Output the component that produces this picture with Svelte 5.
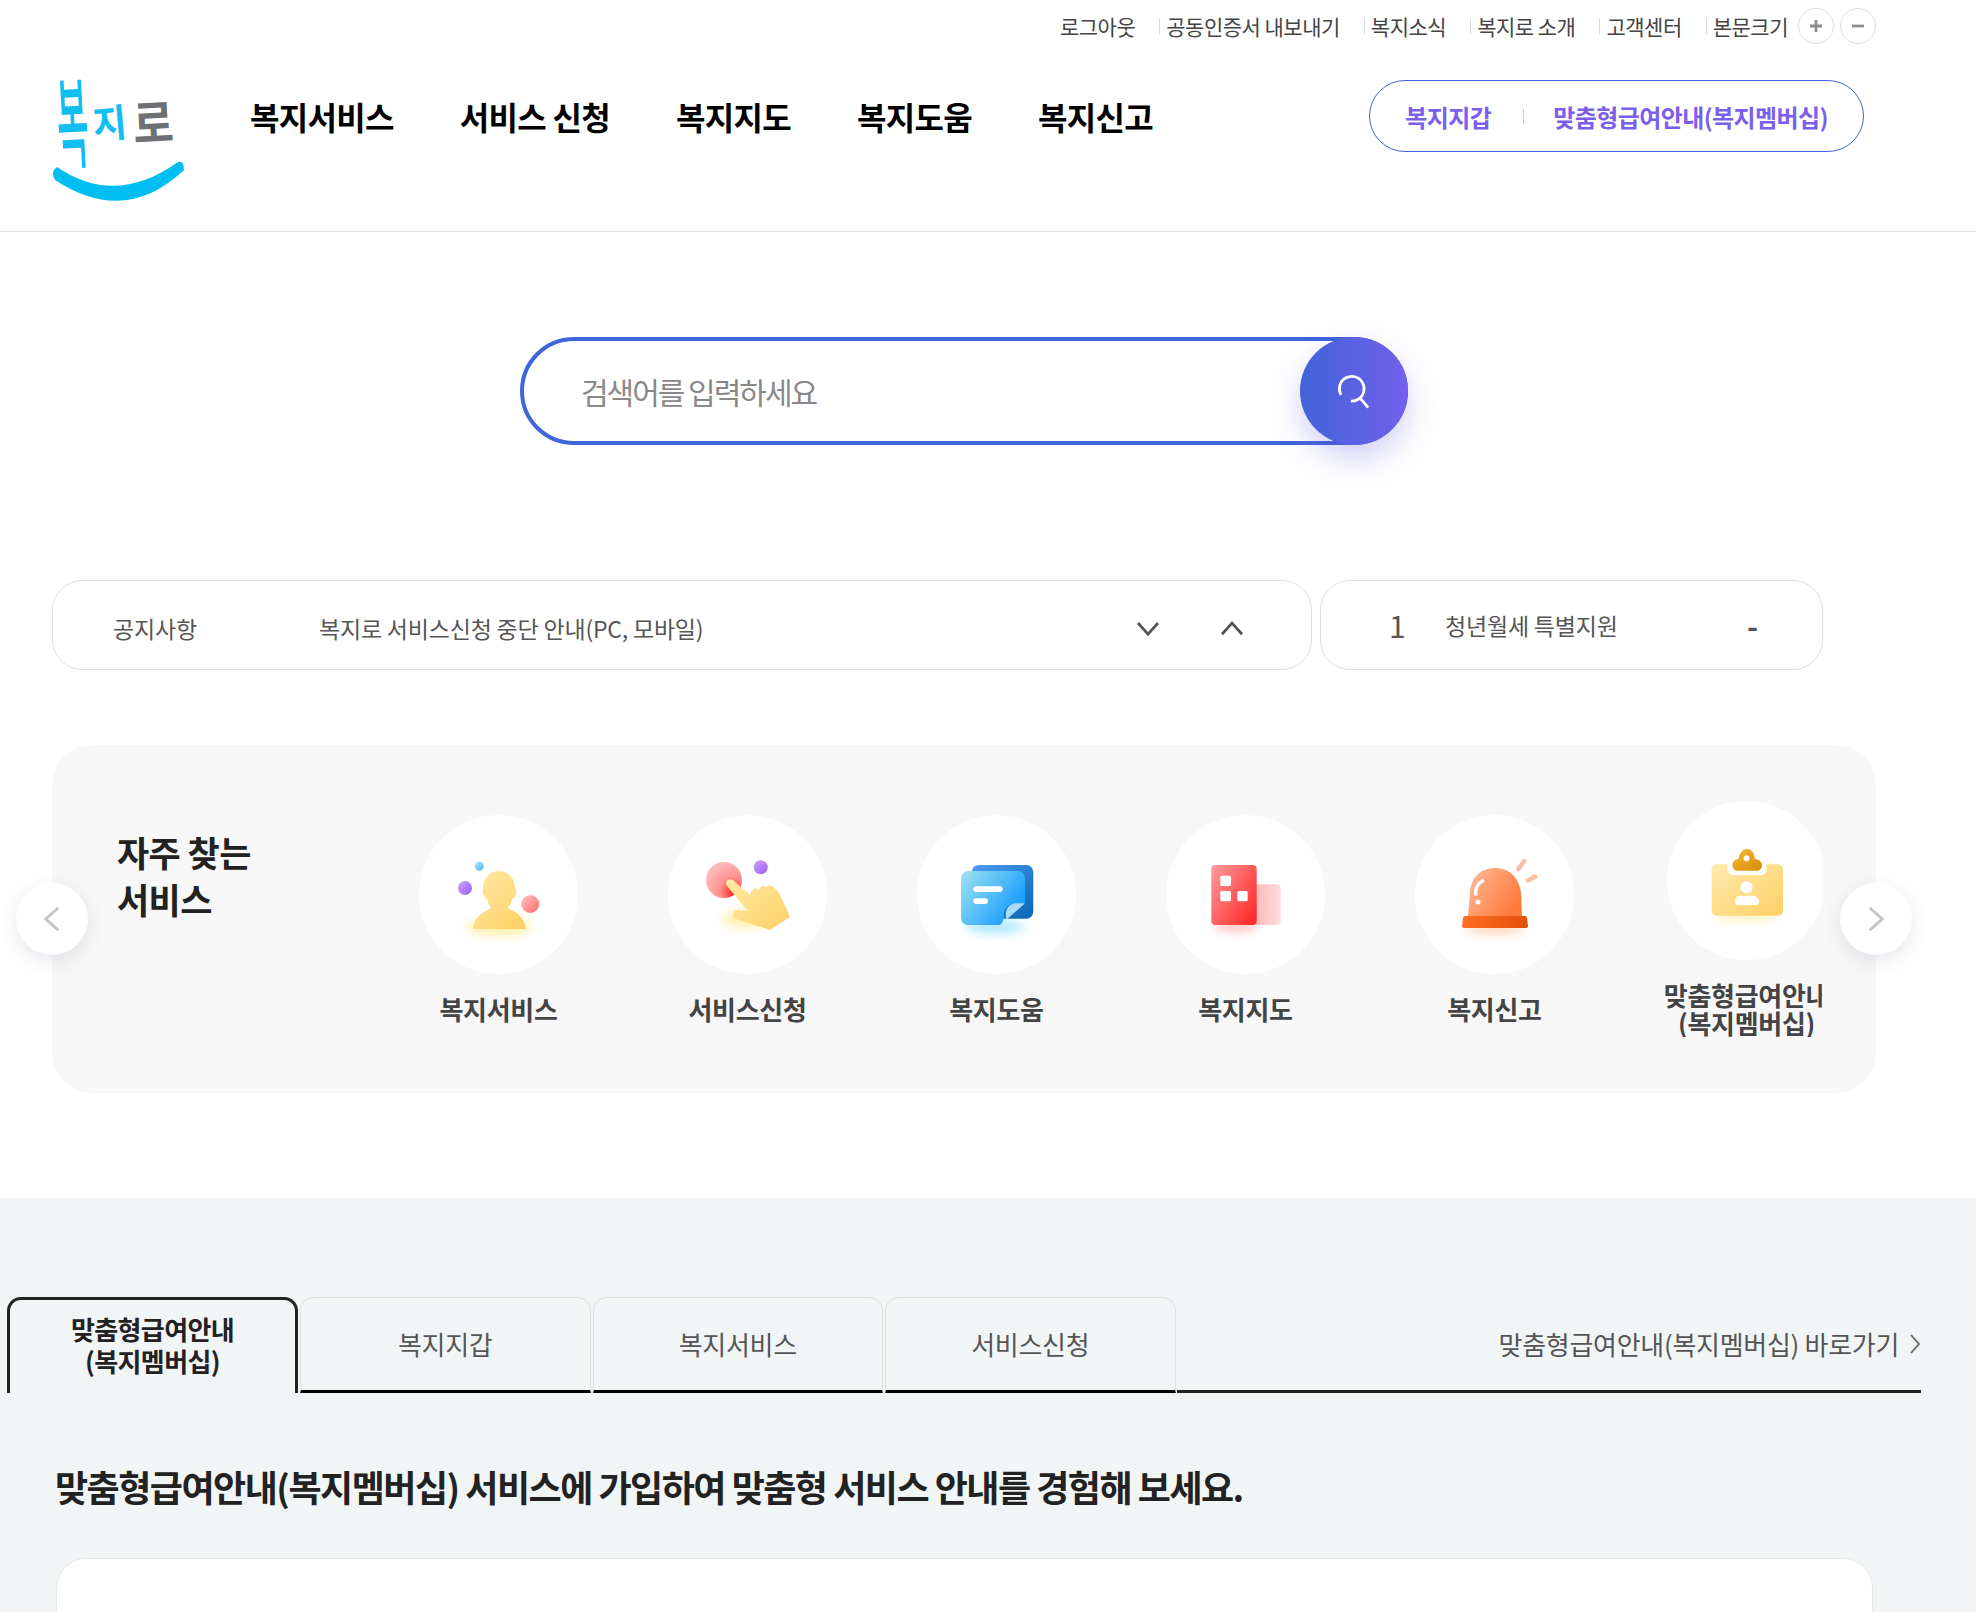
<script>
  const utilLinks = ["공동인증서 내보내기", "복지소식", "복지로 소개", "고객센터"];
  const navItems = ["복지서비스", "서비스 신청", "복지지도", "복지도움", "복지신고"];
  const tabs = ["복지지갑", "복지서비스", "서비스신청"];
</script>

{#snippet chevron(points, cls)}
  <svg class={cls} viewBox="0 0 24 24" aria-hidden="true">
    <polyline {points} fill="none" stroke="currentColor" stroke-width="2.2" />
  </svg>
{/snippet}

{#snippet iconPerson()}
  <svg class="icon" viewBox="0 0 159 159" aria-hidden="true">
    <defs>
      <linearGradient id="p-y" x1="0" y1="0" x2="1" y2="1"><stop offset="0" stop-color="#ffe9a6" /><stop offset="1" stop-color="#ffd064" /></linearGradient>
      <linearGradient id="p-r" x1="0" y1="0" x2="1" y2="1"><stop offset="0" stop-color="#ffc4c4" /><stop offset="1" stop-color="#ff6b6b" /></linearGradient>
      <linearGradient id="p-v" x1="0" y1="0" x2="1" y2="1"><stop offset="0" stop-color="#c9a6ff" /><stop offset="1" stop-color="#9a5cf0" /></linearGradient>
      <linearGradient id="p-b" x1="0" y1="0" x2="1" y2="1"><stop offset="0" stop-color="#b4e6f6" /><stop offset="1" stop-color="#4ab4ea" /></linearGradient>
    </defs>
    <ellipse class="glow" cx="80" cy="112" rx="32" ry="9" fill="#fff0b0" />
    <circle cx="60.3" cy="51.3" r="4.5" fill="url(#p-b)" />
    <circle cx="46" cy="73" r="7" fill="url(#p-v)" />
    <circle cx="111.3" cy="89" r="9" fill="url(#p-r)" />
    <path d="M64 73c0-10 7-17 16-17s16 7 16 17c0 1 2 3 1 6-1 2-2 4-4 5-1 4-2 6-4 9 3 3 15 4 18 21H54c3-17 15-18 18-21-2-3-3-5-4-9-2-1-3-3-4-5-1-3 0-5 0-6z" fill="url(#p-y)" />
  </svg>
{/snippet}

{#snippet iconHand()}
  <svg class="icon" viewBox="0 0 159 159" aria-hidden="true">
    <defs>
      <radialGradient id="h-r" cx="0.8" cy="0.85" r="0.85"><stop offset="0" stop-color="#ff1a1a" /><stop offset="0.5" stop-color="#ff8f8f" /><stop offset="1" stop-color="#ffb8b8" /></radialGradient>
      <linearGradient id="h-y" x1="0" y1="0" x2="1" y2="1"><stop offset="0" stop-color="#ffe9a6" /><stop offset="1" stop-color="#ffd064" /></linearGradient>
      <linearGradient id="h-v" x1="0" y1="0" x2="1" y2="1"><stop offset="0" stop-color="#c9a6ff" /><stop offset="1" stop-color="#9a5cf0" /></linearGradient>
    </defs>
    <ellipse class="glow" cx="78" cy="104" rx="24" ry="9" fill="#fff0b0" />
    <circle cx="56" cy="65" r="18" fill="url(#h-r)" />
    <circle cx="92.7" cy="52.3" r="7" fill="url(#h-v)" />
    <path d="M59 71c-3-3 1-9 6-6l17 15c0-2 1-5 4-6 2-1 4 0 5 1 0-2 2-4 4-4 2 0 3 1 4 1 1-2 3-2 5-1 4 3 7 6 9 11l9 20-20 13c-1 0-2 0-3-1l-31-10c-5-2-3-9 2-9l10 1z" fill="url(#h-y)" />
  </svg>
{/snippet}

{#snippet iconNote()}
  <svg class="icon" viewBox="0 0 159 159" aria-hidden="true">
    <defs>
      <linearGradient id="n-b" x1="0" y1="0" x2="1" y2="1"><stop offset="0" stop-color="#4a9cf2" /><stop offset="1" stop-color="#0868b4" /></linearGradient>
      <linearGradient id="n-f" x1="0" y1="0" x2="1" y2="0.6"><stop offset="0" stop-color="#a0e4ef" /><stop offset="1" stop-color="#149bff" /></linearGradient>
    </defs>
    <ellipse class="glow" cx="78" cy="112" rx="30" ry="6" fill="#a8e6ff" />
    <rect x="54.7" y="50" width="61.6" height="53.7" rx="7" fill="url(#n-b)" />
    <path d="M51 56h50a7 7 0 0 1 7 7v25.300l-13 1c-5 1-8 5-8 9 0 5-1 11-5 11.700H51a7 7 0 0 1-7-7V63a7 7 0 0 1 7-7z" fill="url(#n-f)" />
    <path d="M108 88.300L89 105c1-3-1-5 0-8 1-5 5-8.700 10-8.700z" fill="#a9dcf5" />
    <rect x="56.300" y="71.300" width="29.400" height="5.600" rx="2.800" fill="#fff" />
    <rect x="56.300" y="83.300" width="14.700" height="5.600" rx="2.800" fill="#fff" />
  </svg>
{/snippet}

{#snippet iconMap()}
  <svg class="icon" viewBox="0 0 159 159" aria-hidden="true">
    <defs>
      <linearGradient id="m-a" x1="0" y1="0" x2="1" y2="0.8"><stop offset="0" stop-color="#ff9c9c" /><stop offset="1" stop-color="#ff2c2c" /></linearGradient>
      <linearGradient id="m-b" x1="0" y1="0" x2="1" y2="0"><stop offset="0" stop-color="#ffb4b4" /><stop offset="1" stop-color="#ffdcdc" /></linearGradient>
    </defs>
    <ellipse class="glow" cx="70" cy="112" rx="22" ry="5" fill="#ffc0c0" />
    <rect x="85" y="69.300" width="29.700" height="40.700" rx="4" fill="url(#m-b)" />
    <rect x="45.300" y="50" width="45.400" height="60" rx="4" fill="url(#m-a)" />
    <rect x="54.300" y="60.700" width="10.700" height="10.300" rx="1.500" fill="#fff" />
    <rect x="54.300" y="76" width="10.700" height="10.300" rx="1.500" fill="#fff" />
    <rect x="71.300" y="76" width="10.400" height="10.300" rx="1.500" fill="#fff" />
  </svg>
{/snippet}

{#snippet iconSiren()}
  <svg class="icon" viewBox="0 0 159 159" aria-hidden="true">
    <defs>
      <linearGradient id="s-a" x1="0" y1="0" x2="1" y2="0.6"><stop offset="0" stop-color="#ffbd9e" /><stop offset="1" stop-color="#ff7a3a" /></linearGradient>
      <linearGradient id="s-b" x1="0" y1="0" x2="1" y2="0"><stop offset="0" stop-color="#ff6e20" /><stop offset="1" stop-color="#e4500c" /></linearGradient>
    </defs>
    <ellipse class="glow" cx="80" cy="114" rx="30" ry="4" fill="#ffc9ad" />
    <path d="M53 101l2-23c1-16 11-25 25-25s24 9 26 25l1 23z" fill="url(#s-a)" />
    <path d="M50 101h60c1 0 2 1 2 2l1 8c0 1-1 2-2 2H49c-1 0-2-1-2-2l1-8c0-1 1-2 2-2z" fill="url(#s-b)" />
    <path d="M60.500 79c0-7 3-11 7-13" fill="none" stroke="#fff" stroke-width="3.500" stroke-linecap="round" />
    <circle cx="63" cy="87" r="2.500" fill="#fff" />
    <path d="M103.500 54L109 46M113 65.500l7-4" fill="none" stroke="#ffbe9f" stroke-width="4.500" stroke-linecap="round" />
  </svg>
{/snippet}

{#snippet iconBoard()}
  <svg class="icon" viewBox="0 0 159 159" aria-hidden="true">
    <defs>
      <linearGradient id="b-a" x1="0" y1="0" x2="1" y2="1"><stop offset="0" stop-color="#ffeaaf" /><stop offset="1" stop-color="#ffd064" /></linearGradient>
      <linearGradient id="b-b" x1="0" y1="0" x2="1" y2="1"><stop offset="0" stop-color="#f5bb30" /><stop offset="1" stop-color="#d98a06" /></linearGradient>
    </defs>
    <ellipse class="glow" cx="80" cy="115" rx="32" ry="4" fill="#fff0b0" />
    <rect x="44.500" y="63.300" width="71.500" height="51.400" rx="5" fill="url(#b-a)" />
    <rect x="60.500" y="58" width="39" height="16" rx="5" fill="#fff" />
    <path d="M71 69.700c-3 0-5.500-2-5.500-5.500s2.500-6 6-6.200C73 51 76 48 80 48s7 3 8 10c3.500.2 7 2.700 7 6.200s-2.500 5.500-5.500 5.500z" fill="url(#b-b)" />
    <circle cx="79.500" cy="57.300" r="3" fill="#fff" />
    <circle cx="79.500" cy="86.300" r="6" fill="#fff" />
    <path d="M73 94.700h13c3 0 6 2 6 5v1c0 2-1 3.300-3 3.300H71c-2 0-3-1.300-3-3.300v-1c0-3 3-5 5-5z" fill="#fff" />
  </svg>
{/snippet}

{#snippet service(icon, line1, line2)}
  <li class="service" class:wide={line2}>
    <span class="service-circle">{@render icon()}</span>
    <span class="service-label">{line1}{#if line2}<br />{line2}{/if}</span>
  </li>
{/snippet}

<div class="page">
  <header class="site-header">
    <div class="util">
      <a href="#top" class="util-first">로그아웃</a>
      {#each utilLinks as link}
        <a href="#top" class="util-link">{link}</a>
      {/each}
      <span class="util-link util-size">본문크기</span>
      <button type="button" class="size-btn" aria-label="크게">
        <svg viewBox="0 0 16 16"><path d="M8 2v12M2 8h12" stroke="#8e8e8e" stroke-width="2.800" /></svg>
      </button>
      <button type="button" class="size-btn" aria-label="작게">
        <svg viewBox="0 0 16 16"><path d="M2 8h12" stroke="#8e8e8e" stroke-width="2.800" /></svg>
      </button>
    </div>
    <div class="main-row">
      <a href="#top" class="logo" aria-label="복지로">
        <svg viewBox="52 78 132 122" width="132" height="122">
          <text class="logo-text" transform="translate(59 161) rotate(-3) scale(0.95 2.750)" font-size="36" fill="#12bdf0">복</text>
          <text class="logo-text bold" transform="translate(94 139) rotate(-5) scale(1 1.050)" font-size="37" fill="#12bdf0">지</text>
          <text class="logo-text bold" transform="translate(134 143) rotate(-3) scale(1 1.150)" font-size="44" fill="#6f7074">로</text>
          <path d="M57 167Q115 207 178 162Q184 160 184 170Q125 226 55 180Q50 172 57 167Z" fill="#00bef2" />
        </svg>
      </a>
      <nav class="gnb">
        {#each navItems as item}
          <a href="#top">{item}</a>
        {/each}
      </nav>
      <div class="quick">
        <a href="#top">복지지갑</a>
        <span class="quick-sep"></span>
        <a href="#top">맞춤형급여안내(복지멤버십)</a>
      </div>
    </div>
  </header>

  <main>
    <form class="search">
      <input type="text" placeholder="검색어를 입력하세요" />
      <button type="button" class="search-btn" aria-label="검색">
        <svg viewBox="0 0 32 32" width="36" height="36">
          <circle cx="14" cy="14" r="11" fill="none" stroke="#fff" stroke-width="2.400" stroke-dasharray="58 11" transform="rotate(150 14 14)" />
          <path d="M22 23l6 7" stroke="#fff" stroke-width="2.400" stroke-linecap="round" />
        </svg>
      </button>
    </form>

    <section class="notice-row">
      <div class="notice">
        <strong>공지사항</strong>
        <span class="notice-text">복지로 서비스신청 중단 안내(PC, 모바일)</span>
        {@render chevron("4,8 12,17 20,8", "notice-arrow")}
        {@render chevron("4,17 12,8 20,17", "notice-arrow up")}
      </div>
      <div class="rank">
        <span class="rank-no">1</span>
        <span class="rank-text">청년월세 특별지원</span>
        <span class="rank-dash">-</span>
      </div>
    </section>

    <section class="services">
      <h2>자주 찾는<br />서비스</h2>
      <ul class="service-track">
        {@render service(iconPerson, "복지서비스")}
        {@render service(iconHand, "서비스신청")}
        {@render service(iconNote, "복지도움")}
        {@render service(iconMap, "복지지도")}
        {@render service(iconSiren, "복지신고")}
        {@render service(iconBoard, "맞춤형급여안내", "(복지멤버십)")}
      </ul>
      <button type="button" class="round-arrow prev" aria-label="이전">
        <svg viewBox="0 0 24 24" width="30" height="30"><polyline points="17,3 7,12 17,21" fill="none" stroke="#c4c4c4" stroke-width="2.400" /></svg>
      </button>
      <button type="button" class="round-arrow next" aria-label="다음">
        <svg viewBox="0 0 24 24" width="30" height="30"><polyline points="7,3 17,12 7,21" fill="none" stroke="#c4c4c4" stroke-width="2.400" /></svg>
      </button>
    </section>
  </main>

  <section class="member">
    <div class="tabs">
      <button type="button" class="tab active">맞춤형급여안내<br />(복지멤버십)</button>
      {#each tabs as tab}
        <button type="button" class="tab">{tab}</button>
      {/each}
      <a href="#top" class="tab-link">
        맞춤형급여안내(복지멤버십) 바로가기
        <svg viewBox="0 0 12 24" width="12" height="24"><polyline points="2,3 10,12 2,21" fill="none" stroke="#666" stroke-width="1.800" /></svg>
      </a>
    </div>
    <h3>맞춤형급여안내(복지멤버십) 서비스에 가입하여 맞춤형 서비스 안내를 경험해 보세요.</h3>
    <div class="member-card"></div>
  </section>
</div>

<style>
  :global(body) {
    margin: 0;
    background: #fff;
  }

  .page {
    position: relative;
    width: 1976px;
    height: 1612px;
    overflow: hidden;
    font-family: "Noto Sans CJK KR", "Noto Sans", sans-serif;
    color: #444;
  }

  a {
    color: inherit;
    text-decoration: none;
  }

  button {
    font: inherit;
    cursor: pointer;
  }

  .site-header {
    height: 231px;
    border-bottom: 1px solid #e0e0e0;
  }

  .util {
    display: flex;
    align-items: center;
    justify-content: flex-end;
    height: 52px;
    padding-right: 100px;
    font-size: 21px;
    letter-spacing: -0.5px;
    line-height: 28px;
  }

  .util-first {
    margin-right: 24px;
  }

  .util-link {
    position: relative;
    padding-left: 7px;
    margin-right: 24px;
  }

  .util-link::before {
    content: "";
    position: absolute;
    left: 0;
    top: 6px;
    height: 16px;
    width: 1px;
    background: #d8d8d8;
  }

  .util-size {
    margin-right: 10px;
  }

  .size-btn {
    width: 36px;
    height: 36px;
    padding: 9px;
    margin-left: 0;
    border: 1px solid #e0e0e0;
    border-radius: 50%;
    background: #fff;
    display: flex;
  }

  .size-btn + .size-btn {
    margin-left: 6px;
  }

  .main-row {
    display: flex;
    align-items: flex-start;
    padding: 0 112px 0 52px;
  }

  .logo {
    display: block;
    height: 122px;
    margin-top: 26px;
  }

  .logo svg {
    display: block;
    overflow: visible;
  }

  .logo-text {
    font-family: "Noto Sans CJK KR", sans-serif;
    font-weight: 500;
  }

  .logo-text.bold {
    font-weight: 700;
  }

  .gnb {
    display: flex;
    gap: 66px;
    margin: 42px 0 0 66px;
    font-size: 32px;
    font-weight: 700;
    line-height: 44px;
    letter-spacing: -0.7px;
    color: #000;
  }

  .quick {
    display: flex;
    align-items: center;
    height: 70px;
    margin: 28px 0 0 auto;
    padding: 0 35px;
    border: 1px solid #4263d9;
    border-radius: 36px;
    font-size: 24px;
    font-weight: 700;
    letter-spacing: -0.6px;
    color: #7a5fec;
  }

  .quick-sep {
    width: 1px;
    height: 15px;
    margin: 0 29px 0 32px;
    background: #ccc;
  }

  .search {
    position: relative;
    display: flex;
    width: 888px;
    height: 108px;
    margin: 105px 0 0 520px;
  }

  .search input {
    flex: 1;
    box-sizing: border-box;
    height: 108px;
    padding: 0 130px 0 57px;
    border: 4px solid #3f65da;
    border-radius: 54px;
    outline: none;
    font: inherit;
    font-size: 30px;
    letter-spacing: -2px;
    background: #fff;
  }

  .search input::placeholder {
    color: #888;
    opacity: 1;
  }

  .search-btn {
    position: absolute;
    right: 0;
    top: 0;
    display: flex;
    align-items: center;
    justify-content: center;
    width: 108px;
    height: 108px;
    padding: 0;
    border: 0;
    border-radius: 50%;
    background: linear-gradient(90deg, #4163d9, #7360ec);
    box-shadow: 0 14px 30px rgba(90, 90, 220, 0.28);
  }

  .notice-row {
    display: flex;
    gap: 8px;
    margin: 135px 0 0 52px;
  }

  .notice,
  .rank {
    display: flex;
    align-items: center;
    box-sizing: border-box;
    height: 90px;
    border: 1px solid #e0e0e0;
    border-radius: 30px;
    font-size: 23px;
    letter-spacing: -0.2px;
    color: #555;
  }

  .notice {
    width: 1260px;
    padding: 5px 64px 0 60px;
  }

  .notice strong {
    width: 206px;
    font-weight: 400;
  }

  .notice-text {
    flex: 1;
  }

  .notice-arrow {
    width: 30px;
    height: 30px;
    color: #555;
  }

  .notice-arrow.up {
    margin-left: 54px;
  }

  .rank {
    width: 503px;
    padding: 0 64px 1px 68px;
  }

  .rank-no {
    width: 56px;
    font-size: 30px;
    line-height: 40px;
  }

  .rank-text {
    flex: 1;
  }

  .rank-dash {
    font-size: 30px;
    font-weight: 700;
  }

  .services {
    position: relative;
    display: flex;
    align-items: center;
    width: 1824px;
    height: 348px;
    margin: 75px 0 0 52px;
    padding-left: 65px;
    box-sizing: border-box;
    border-radius: 40px;
    background: #f7f7f7;
  }

  .services h2 {
    flex: 0 0 257px;
    align-self: flex-start;
    margin: 83px 0 0;
    font-size: 35px;
    line-height: 47px;
    font-weight: 700;
    letter-spacing: -0.6px;
    color: #222;
  }

  .service-track {
    display: flex;
    align-items: center;
    width: 1448px;
    margin: 0;
    padding: 0;
    overflow: hidden;
    list-style: none;
  }

  .service {
    flex: 0 0 249px;
    display: flex;
    flex-direction: column;
    align-items: center;
    gap: 21px;
  }

  .service.wide {
    margin-left: 3px;
  }

  .service-circle {
    display: block;
    width: 159px;
    height: 159px;
    border-radius: 50%;
    background: #fff;
  }

  .icon {
    display: block;
    width: 159px;
    height: 159px;
  }

  .glow {
    filter: blur(5px);
  }

  .service-label {
    font-size: 26px;
    font-weight: 700;
    line-height: 28px;
    letter-spacing: -0.3px;
    text-align: center;
    white-space: nowrap;
    color: #444;
  }

  .round-arrow {
    position: absolute;
    top: 138px;
    display: flex;
    align-items: center;
    justify-content: center;
    width: 72px;
    height: 72px;
    padding: 0;
    border: 0;
    border-radius: 50%;
    background: #fff;
    box-shadow: 0 6px 18px rgba(80, 90, 120, 0.14);
  }

  .round-arrow.prev {
    left: -36px;
  }

  .round-arrow.next {
    right: -36px;
  }

  .member {
    margin-top: 105px;
    height: 414px;
    padding: 99px 0 0 0;
    box-sizing: border-box;
    background: #f2f5f6;
  }

  .tabs {
    display: flex;
    gap: 2px;
    width: 1914px;
    height: 96px;
    margin-left: 7px;
  }

  .tab {
    flex: 0 0 290.5px;
    box-sizing: border-box;
    height: 96px;
    padding: 0 0 1px;
    border: 1px solid #e0e0e0;
    border-bottom: 3px solid #000;
    border-radius: 14px 14px 0 0;
    background: transparent;
    font-size: 26px;
    letter-spacing: -0.3px;
    line-height: 32px;
    color: #555;
  }

  .tab.active {
    flex-basis: 291px;
    padding: 0 0 3px;
    border: 3px solid #222;
    border-bottom: 0;
    font-size: 26px;
    font-weight: 700;
    letter-spacing: -0.6px;
    color: #222;
  }

  .tab-link {
    flex: 1;
    display: flex;
    align-items: center;
    justify-content: flex-end;
    gap: 10px;
    box-sizing: border-box;
    height: 96px;
    margin-left: -1px;
    padding-bottom: 0;
    border-bottom: 3px solid #222;
    font-size: 26px;
    letter-spacing: -0.3px;
    color: #555;
  }

  .member h3 {
    margin: 68px 0 0 55px;
    font-size: 36px;
    font-weight: 700;
    line-height: 50px;
    letter-spacing: -1.5px;
    color: #222;
  }

  .member-card {
    box-sizing: border-box;
    width: 1817px;
    height: 200px;
    margin: 47px 0 0 56px;
    border: 1px solid #e6e6e6;
    border-radius: 30px;
    background: #fff;
  }
</style>
